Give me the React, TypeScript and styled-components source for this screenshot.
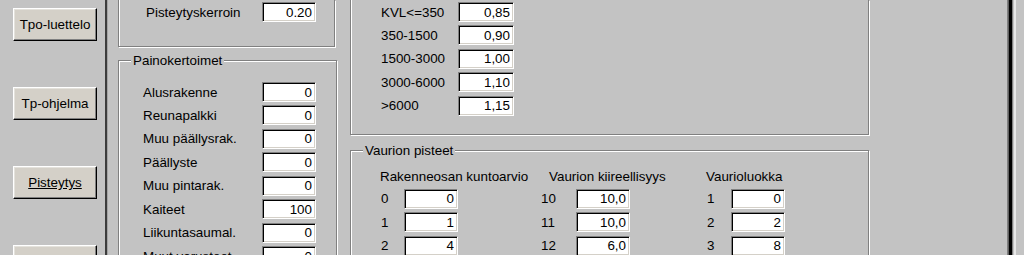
import React from 'react';
import styled, { createGlobalStyle } from 'styled-components';

const FONT = '"Liberation Sans", Arial, sans-serif';
const SIZE = '13.4px';

const weights = [
  { label: 'Alusrakenne', value: '0' },
  { label: 'Reunapalkki', value: '0' },
  { label: 'Muu päällysrak.', value: '0' },
  { label: 'Päällyste', value: '0' },
  { label: 'Muu pintarak.', value: '0' },
  { label: 'Kaiteet', value: '100' },
  { label: 'Liikuntasaumal.', value: '0' },
  { label: 'Muut varusteet', value: '0' },
];

const kvl = [
  { label: 'KVL<=350', value: '0,85' },
  { label: '350-1500', value: '0,90' },
  { label: '1500-3000', value: '1,00' },
  { label: '3000-6000', value: '1,10' },
  { label: '>6000', value: '1,15' },
];

const scoreColumns = [
  {
    title: 'Rakenneosan kuntoarvio',
    width: 160,
    indent: 0,
    numWidth: 24,
    rows: [
      ['0', '0'],
      ['1', '1'],
      ['2', '4'],
    ],
  },
  {
    title: 'Vaurion kiireellisyys',
    width: 166,
    indent: 9,
    numWidth: 36,
    rows: [
      ['10', '10,0'],
      ['11', '10,0'],
      ['12', '6,0'],
    ],
  },
  {
    title: 'Vaurioluokka',
    width: 120,
    indent: 0,
    numWidth: 25,
    rows: [
      ['1', '0'],
      ['2', '2'],
      ['3', '8'],
    ],
  },
];

function App() {
  return (
    <Window>
      <GlobalStyle />
      <Sidebar>
        <SideButton>Tpo-luettelo</SideButton>
        <SideButton>Tp-ohjelma</SideButton>
        <SideButton $active>Pisteytys</SideButton>
        <SideButton />
      </Sidebar>
      <Divider />
      <Content>
        <Column $w={220}>
          <Group $w={217} $h={47} $cut>
            <FieldList $pt={2} $pl={27}>
              <FieldRow $label={116}>
                <span>Pisteytyskerroin</span>
                <Field readOnly value="0.20" />
              </FieldRow>
            </FieldList>
          </Group>
          <Group $w={219} $h={260} $mt={13}>
            <Legend>Painokertoimet</Legend>
            <FieldList $pt={21} $pl={24}>
              {weights.map((w) => (
                <FieldRow key={w.label} $label={119}>
                  <span>{w.label}</span>
                  <Field readOnly value={w.value} />
                </FieldRow>
              ))}
            </FieldList>
          </Group>
        </Column>
        <Column $w={520}>
          <Group $w={519} $h={135} $cut>
            <FieldList $pt={2} $pl={30}>
              {kvl.map((k) => (
                <FieldRow key={k.label} $label={77} $field={56}>
                  <span>{k.label}</span>
                  <Field readOnly value={k.value} />
                </FieldRow>
              ))}
            </FieldList>
          </Group>
          <Group $w={519} $h={160} $mt={15}>
            <Legend>Vaurion pisteet</Legend>
            <ScoreGrid>
              {scoreColumns.map((col) => (
                <ScoreColumn key={col.title} $w={col.width}>
                  <ColumnHead $indent={col.indent}>{col.title}</ColumnHead>
                  {col.rows.map(([num, val]) => (
                    <FieldRow key={num} $label={col.numWidth}>
                      <Num>{num}</Num>
                      <Field readOnly value={val} />
                    </FieldRow>
                  ))}
                </ScoreColumn>
              ))}
            </ScoreGrid>
          </Group>
        </Column>
      </Content>
      <RightFrame />
    </Window>
  );
}

export default App;

const GlobalStyle = createGlobalStyle`
  html, body {
    margin: 0;
    padding: 0;
    background: #c3c3c3;
  }
  body {
    font-family: ${FONT};
    font-size: ${SIZE};
    color: #000000;
  }
`;

const Window = styled.div`
  display: flex;
  width: 1024px;
  height: 255px;
  overflow: hidden;
  background: #c3c3c3;
`;

const Sidebar = styled.div`
  width: 105px;
  flex: none;
  box-sizing: border-box;
  display: flex;
  flex-direction: column;
  gap: 46px;
  padding: 8px 0 0 13px;
`;

const SideButton = styled.button<{ $active?: boolean }>`
  width: 84px;
  height: 33px;
  flex: none;
  padding: 0;
  background: #d4d0c8;
  border: 1px solid;
  border-color: #ffffff #000000 #000000 #ffffff;
  box-shadow: inset -1px -1px 0 #808080, inset 1px 1px 0 #e4e2dc;
  font: ${SIZE} ${FONT};
  color: #000000;
  text-decoration: ${({ $active }) => ($active ? 'underline' : 'none')};
`;

const Divider = styled.div`
  width: 2px;
  flex: none;
  background: #3c3c3c;
  border-right: 1px solid #a4a4a4;
`;

const Content = styled.div`
  flex: 1;
  display: flex;
  gap: 12px;
  padding-left: 10px;
`;

const Column = styled.div<{ $w: number }>`
  width: ${({ $w }) => $w}px;
  flex: none;
  display: flex;
  flex-direction: column;
`;

const Group = styled.div<{ $w: number; $h: number; $cut?: boolean; $mt?: number }>`
  position: relative;
  box-sizing: border-box;
  flex: none;
  width: ${({ $w }) => $w}px;
  height: ${({ $h }) => $h}px;
  margin-top: ${({ $mt }) => $mt || 0}px;
  border: 1px solid #808080;
  border-top: ${({ $cut }) => ($cut ? 'none' : '1px solid #808080')};
  box-shadow: 1px 1px 0 #ffffff,
    inset ${({ $cut }) => ($cut ? '1px 0' : '1px 1px')} 0 #ffffff;
`;

const Legend = styled.span`
  position: absolute;
  top: -8px;
  left: 12px;
  padding: 0 2px;
  line-height: 15px;
  background: #c3c3c3;
`;

const FieldList = styled.div<{ $pt: number; $pl: number }>`
  display: flex;
  flex-direction: column;
  gap: 3.45px;
  padding: ${({ $pt, $pl }) => `${$pt}px 0 0 ${$pl}px`};
`;

const FieldRow = styled.div<{ $label: number; $field?: number }>`
  display: grid;
  grid-template-columns: ${({ $label, $field }) => `${$label}px ${$field || 54}px`};
  align-items: center;
  height: 20px;
  white-space: nowrap;
`;

const Field = styled.input`
  box-sizing: border-box;
  width: 100%;
  height: 20px;
  margin: 0;
  padding: 0 3px 0 0;
  background: #ffffff;
  border: 1px solid;
  border-color: #808080 #ffffff #ffffff #808080;
  box-shadow: inset 1px 1px 0 #000000, inset -1px -1px 0 #d4d0c8;
  font: ${SIZE} ${FONT};
  color: #000000;
  text-align: right;
  outline: none;
`;

const ScoreGrid = styled.div`
  display: flex;
  padding: 18px 0 0 29px;
`;

const ScoreColumn = styled.div<{ $w: number }>`
  width: ${({ $w }) => $w}px;
  flex: none;
  display: flex;
  flex-direction: column;
  gap: 3.5px;
`;

const ColumnHead = styled.div<{ $indent: number }>`
  margin-left: ${({ $indent }) => $indent}px;
  line-height: 16px;
  white-space: nowrap;
`;

const Num = styled.span`
  padding-left: 1px;
`;

const RightFrame = styled.div`
  width: 16px;
  flex: none;
  border-left: 1px solid #808080;
  box-shadow: inset 1px 0 0 #606060, inset 4px 0 0 #000000, inset 5px 0 0 #808080,
    inset 6px 0 0 #c3c3c3, inset 8px 0 0 #e8e8e8;
`;
